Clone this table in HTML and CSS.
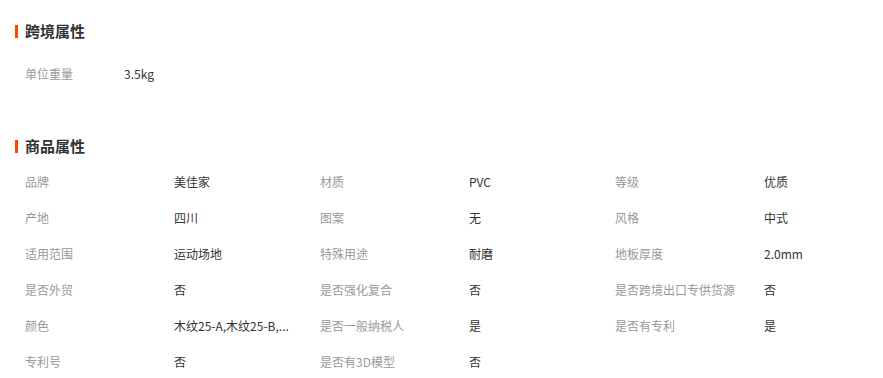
FILE: index.html
```html
<!DOCTYPE html>
<html lang="zh-CN">
<head>
<meta charset="utf-8">
<title>属性</title>
<link rel="stylesheet" href="styles.css">
</head>
<body>
<div class="page">
  <section class="section section-first">
    <h2 class="title">跨境属性</h2>
    <ul class="attrs">
      <li class="attr attr-narrow"><span class="label">单位重量</span><span class="value">3.5kg</span></li>
    </ul>
  </section>
  <section class="section section-second">
    <h2 class="title">商品属性</h2>
    <ul class="attrs">
      <li class="attr"><span class="label">品牌</span><span class="value">美佳家</span></li>
      <li class="attr"><span class="label">材质</span><span class="value">PVC</span></li>
      <li class="attr"><span class="label">等级</span><span class="value">优质</span></li>
      <li class="attr"><span class="label">产地</span><span class="value">四川</span></li>
      <li class="attr"><span class="label">图案</span><span class="value">无</span></li>
      <li class="attr"><span class="label">风格</span><span class="value">中式</span></li>
      <li class="attr"><span class="label">适用范围</span><span class="value">运动场地</span></li>
      <li class="attr"><span class="label">特殊用途</span><span class="value">耐磨</span></li>
      <li class="attr"><span class="label">地板厚度</span><span class="value">2.0mm</span></li>
      <li class="attr"><span class="label">是否外贸</span><span class="value">否</span></li>
      <li class="attr"><span class="label">是否强化复合</span><span class="value">否</span></li>
      <li class="attr"><span class="label">是否跨境出口专供货源</span><span class="value">否</span></li>
      <li class="attr"><span class="label">颜色</span><span class="value">木纹25-A,木纹25-B,...</span></li>
      <li class="attr"><span class="label">是否一般纳税人</span><span class="value">是</span></li>
      <li class="attr"><span class="label">是否有专利</span><span class="value">是</span></li>
      <li class="attr"><span class="label">专利号</span><span class="value">否</span></li>
      <li class="attr"><span class="label">是否有3D模型</span><span class="value">否</span></li>
    </ul>
  </section>
</div>
</body>
</html>
```
FILE: styles.css
```css
html, body {
  margin: 0;
  padding: 0;
  background: #fff;
}
body {
  font-family: "Microsoft YaHei", "Noto Sans CJK SC", sans-serif;
  color: #333;
}
.page {
  padding: 21px 0 0 15px;
}
.section-first {
  padding-bottom: 45px;
}
.title {
  margin: 0;
  display: flex;
  align-items: center;
  gap: 7px;
  font-size: 15px;
  font-weight: bold;
  line-height: 20px;
  height: 20px;
  color: #333;
}
.title::before {
  content: "";
  width: 3px;
  height: 13px;
  background: #ff4400;
}
.attrs {
  list-style: none;
  margin: 0;
  padding: 0 0 0 10px;
  display: grid;
  grid-template-columns: repeat(3, 295px);
}
.section-first .attrs {
  margin-top: 14px;
}
.section-second .attrs {
  margin-top: 7px;
}
.attr {
  display: flex;
  align-items: center;
  height: 36px;
  font-size: 12px;
  min-width: 0;
}
.label {
  flex: 0 0 149px;
  color: #999;
  white-space: nowrap;
}
.attr-narrow .label {
  flex-basis: 99px;
}
.value {
  color: #333;
  white-space: nowrap;
}
```
